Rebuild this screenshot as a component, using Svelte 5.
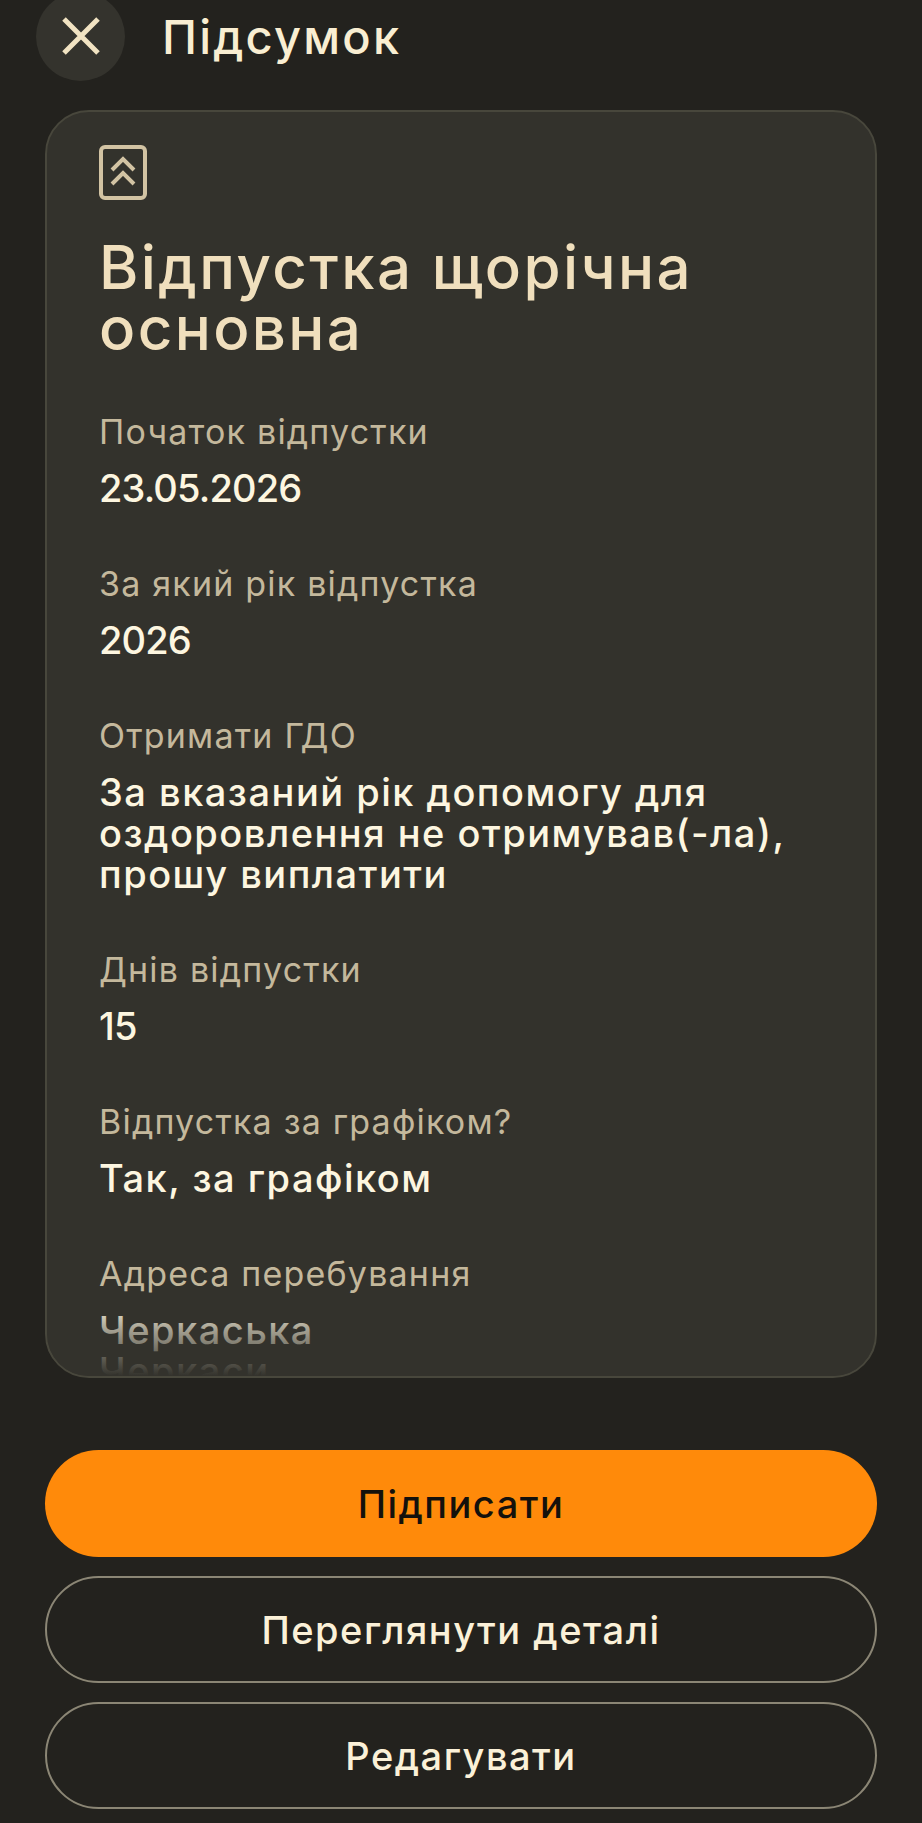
<script>
	let rows = [
		{ label: "Початок відпустки", value: "23.05.2026", num: true },
		{ label: "За який рік відпустка", value: "2026", num: true },
		{ label: "Отримати ГДО", value: "За вказаний рік допомогу для оздоровлення не отримував(-ла), прошу виплатити" },
		{ label: "Днів відпустки", value: "15", num: true },
		{ label: "Відпустка за графіком?", value: "Так, за графіком" },
		{ label: "Адреса перебування", value: "Черкаська\nЧеркаси" },
	];
</script>

<div class="page">
	<header class="top">
		<button class="close" aria-label="Закрити">
			<svg width="40" height="40" viewBox="0 0 40 40" fill="none">
				<path d="M3 3 L37 37 M37 3 L3 37" stroke="#f1e3c2" stroke-width="5" />
			</svg>
		</button>
		<h1>Підсумок</h1>
	</header>

	<section class="card">
		<div class="scroll">
			<svg class="badge" width="48" height="55" viewBox="0 0 48 55" fill="none">
				<rect x="2" y="2" width="44" height="51" rx="4" stroke="#d2c3a3" stroke-width="4" />
				<path d="M13 25 L24 14 L35 25 M13 39 L24 28 L35 39" stroke="#d2c3a3" stroke-width="4" />
			</svg>
			<h2>Відпустка щорічна основна</h2>
			<div class="rows">
				{#each rows as row}
					<div>
						<div class="label">{row.label}</div>
						<div class="value" class:num={row.num}>{row.value}</div>
					</div>
				{/each}
			</div>
		</div>
		<div class="fade"></div>
	</section>

	<div class="actions">
		<button class="btn primary">Підписати</button>
		<button class="btn">Переглянути деталі</button>
		<button class="btn">Редагувати</button>
	</div>
</div>

<style>
	:global(body) {
		margin: 0;
		background: #23221e;
	}
	* {
		box-sizing: border-box;
	}
	.page {
		height: 1823px;
		overflow: hidden;
		background: #23221e;
		font-family: Inter, "Liberation Sans", sans-serif;
		padding: 0 45px;
		display: flex;
		flex-direction: column;
	}
	.top {
		display: flex;
		align-items: center;
		height: 88px;
		margin-top: -8px;
		margin-left: -9px;
		gap: 37px;
	}
	.close {
		width: 89px;
		height: 89px;
		border-radius: 50%;
		border: none;
		padding: 0;
		background: #34332d;
		display: flex;
		align-items: center;
		justify-content: center;
	}
	h1 {
		margin: 0;
		font-size: 47px;
		font-weight: 500;
		letter-spacing: 2.2px;
		color: #f9eed2;
	}
	.card {
		position: relative;
		margin-top: 30px;
		height: 1268px;
		border: 2px solid #48473c;
		border-radius: 44px;
		background: #33322c;
		overflow: hidden;
	}
	.scroll {
		padding: 33px 52px 0;
	}
	.badge {
		display: block;
	}
	h2 {
		margin: 37px 0 0;
		font-size: 60px;
		line-height: 61px;
		font-weight: 500;
		letter-spacing: 2.4px;
		color: #f0dfbd;
	}
	.rows {
		margin-top: 53px;
		display: flex;
		flex-direction: column;
		gap: 55px;
	}
	.label {
		font-size: 34px;
		line-height: 40px;
		letter-spacing: 1.2px;
		color: #c4b89c;
	}
	.value {
		margin-top: 16px;
		font-size: 38px;
		line-height: 41px;
		font-weight: 450;
		letter-spacing: 1.5px;
		color: #fdf6e0;
		white-space: pre-line;
	}
	.num {
		letter-spacing: -0.85px;
	}
	.fade {
		position: absolute;
		left: 0;
		right: 0;
		bottom: 0;
		height: 75px;
		background: linear-gradient(to bottom, rgba(51, 50, 44, 0), rgba(51, 50, 44, 0.45) 40%, #33322c 100%);
	}
	.actions {
		margin-top: 72px;
		display: flex;
		flex-direction: column;
		gap: 19px;
	}
	.btn {
		height: 107px;
		border-radius: 54px;
		border: 2px solid #8b8675;
		background: transparent;
		color: #fbf1d8;
		font: inherit;
		font-size: 38px;
		font-weight: 450;
		letter-spacing: 1.5px;
	}
	.primary {
		border: none;
		background: #ff8a0a;
		color: #14110c;
	}
</style>
